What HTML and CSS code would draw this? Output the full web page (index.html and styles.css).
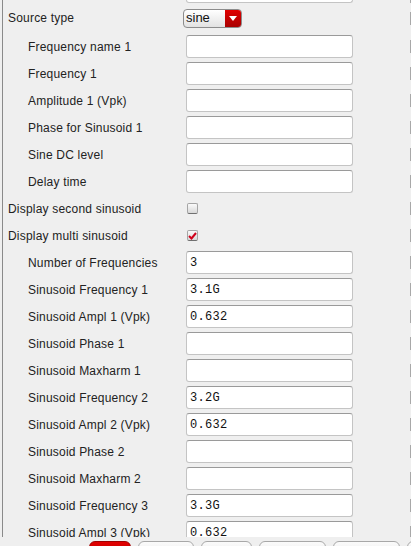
FILE: index.html
```html
<!DOCTYPE html>
<html lang="en">
<head>
  <meta charset="UTF-8">
  <title>Sine source properties</title>
  <link rel="stylesheet" href="styles.css">
</head>
<body>
  <div class="panel">
    <div class="rows">
      <div class="row cut"><span class="label"></span><input class="field" type="text"><span class="edge"></span></div>

      <div class="row tall">
        <span class="label">Source type</span>
        <div class="combo"><span class="combo-text">sine</span><span class="combo-btn"><svg width="8" height="5" viewBox="0 0 8 5"><path d="M0 0h8L4 5z" fill="#fff"/></svg></span></div>
        <span class="edge"></span>
      </div>

      <div class="row"><span class="label sub">Frequency name 1</span><input class="field" type="text"><span class="edge"></span></div>
      <div class="row"><span class="label sub">Frequency 1</span><input class="field" type="text"><span class="edge"></span></div>
      <div class="row"><span class="label sub">Amplitude 1 (Vpk)</span><input class="field" type="text"><span class="edge"></span></div>
      <div class="row"><span class="label sub">Phase for Sinusoid 1</span><input class="field" type="text"><span class="edge"></span></div>
      <div class="row"><span class="label sub">Sine DC level</span><input class="field" type="text"><span class="edge"></span></div>
      <div class="row"><span class="label sub">Delay time</span><input class="field" type="text"><span class="edge"></span></div>

      <div class="row"><span class="label">Display second sinusoid</span><span class="check"></span><span class="edge"></span></div>
      <div class="row">
        <span class="label">Display multi sinusoid</span>
        <span class="check"><svg width="9" height="8" viewBox="0 0 9 8"><path d="M1 4l2.5 2.5L8 1" fill="none" stroke="#d0021b" stroke-width="2"/></svg></span>
        <span class="edge"></span>
      </div>

      <div class="row"><span class="label sub">Number of Frequencies</span><input class="field" type="text" value="3"><span class="edge"></span></div>
      <div class="row"><span class="label sub">Sinusoid Frequency 1</span><input class="field" type="text" value="3.1G"><span class="edge"></span></div>
      <div class="row"><span class="label sub">Sinusoid Ampl 1 (Vpk)</span><input class="field" type="text" value="0.632"><span class="edge"></span></div>
      <div class="row"><span class="label sub">Sinusoid Phase 1</span><input class="field" type="text"><span class="edge"></span></div>
      <div class="row"><span class="label sub">Sinusoid Maxharm 1</span><input class="field" type="text"><span class="edge"></span></div>
      <div class="row"><span class="label sub">Sinusoid Frequency 2</span><input class="field" type="text" value="3.2G"><span class="edge"></span></div>
      <div class="row"><span class="label sub">Sinusoid Ampl 2 (Vpk)</span><input class="field" type="text" value="0.632"><span class="edge"></span></div>
      <div class="row"><span class="label sub">Sinusoid Phase 2</span><input class="field" type="text"><span class="edge"></span></div>
      <div class="row"><span class="label sub">Sinusoid Maxharm 2</span><input class="field" type="text"><span class="edge"></span></div>
      <div class="row"><span class="label sub">Sinusoid Frequency 3</span><input class="field" type="text" value="3.3G"><span class="edge"></span></div>
      <div class="row"><span class="label sub">Sinusoid Ampl 3 (Vpk)</span><input class="field" type="text" value="0.632"><span class="edge"></span></div>
    </div>
  </div>

  <!-- dialog buttons, only their top edge is in view -->
  <div class="buttons">
    <button class="btn primary w41"></button>
    <button class="btn w55"></button>
    <button class="btn w50"></button>
    <button class="btn w66"></button>
    <button class="btn w66"></button>
    <button class="btn w66"></button>
  </div>
</body>
</html>
```

FILE: styles.css
```css
html, body {
  margin: 0;
  padding: 0;
  height: 546px;
  overflow: hidden;
  background: #efefef;
  font-family: 'Liberation Sans', Arial, sans-serif;
  font-size: 12px;
  color: #222;
}

.panel {
  margin-left: 2px;
  height: 537px;
  border-left: 1px solid #8a8a8a;
  overflow: hidden;
}

.rows {
  display: flex;
  flex-direction: column;
  margin-top: -22px;
}

.row {
  display: grid;
  grid-template-columns: 183px 167px 1fr;
  align-items: center;
  height: 27px;
}

.row.cut {
  height: 25px;
  align-items: end;
}

.row.tall {
  height: 30px;
  align-items: center;
}

.label {
  padding-left: 5px;
  white-space: nowrap;
  letter-spacing: 0.2px;
}

.label.sub {
  padding-left: 25px;
}

.field {
  box-sizing: border-box;
  width: 167px;
  height: 23px;
  margin: 0;
  padding: 1px 3px 0;
  background: #fff;
  border: 1px solid #c4c4c4;
  border-top-color: #9a9a9a;
  border-radius: 3px;
  font-family: 'Liberation Mono', 'DejaVu Sans Mono', monospace;
  font-size: 12px;
  letter-spacing: 0.3px;
  color: #111;
  outline: none;
}

.edge {
  justify-self: end;
  width: 1px;
  height: 13px;
  background: #a8a8a8;
}

.combo {
  display: flex;
  box-sizing: border-box;
  width: 59px;
  height: 19px;
  margin-left: -3px;
  border: 1px solid #8c8c8c;
  border-radius: 4px;
  overflow: hidden;
  background: linear-gradient(#ffffff, #e2e2e2);
}

.combo-text {
  flex: 1;
  padding-left: 2px;
  line-height: 16px;
  font-size: 13px;
  color: #111;
}

.combo-btn {
  display: flex;
  align-items: center;
  justify-content: center;
  width: 16px;
  background: linear-gradient(#e00000, #a80000);
}

.check {
  display: flex;
  align-items: center;
  justify-content: center;
  box-sizing: border-box;
  width: 11px;
  height: 11px;
  margin-left: 1px;
  border: 1px solid #a5a5a5;
  border-bottom-color: #707070;
  border-radius: 2px;
  background: linear-gradient(#fafafa, #d8d8d8);
}

.buttons {
  display: flex;
  gap: 7px;
  margin-top: 4px;
  padding-left: 89px;
  overflow: hidden;
}

.btn {
  flex: none;
  height: 22px;
  padding: 0;
  border: 1px solid #a8a8a8;
  border-radius: 6px;
  background: linear-gradient(#fbfbfb, #e6e6e6);
}

.btn.primary {
  border-color: #a00000;
  background: linear-gradient(#e20000, #b00000);
}

.w41 { width: 42px; }
.w50 { width: 51px; }
.w55 { width: 56px; }
.w66 { width: 67px; }
```
